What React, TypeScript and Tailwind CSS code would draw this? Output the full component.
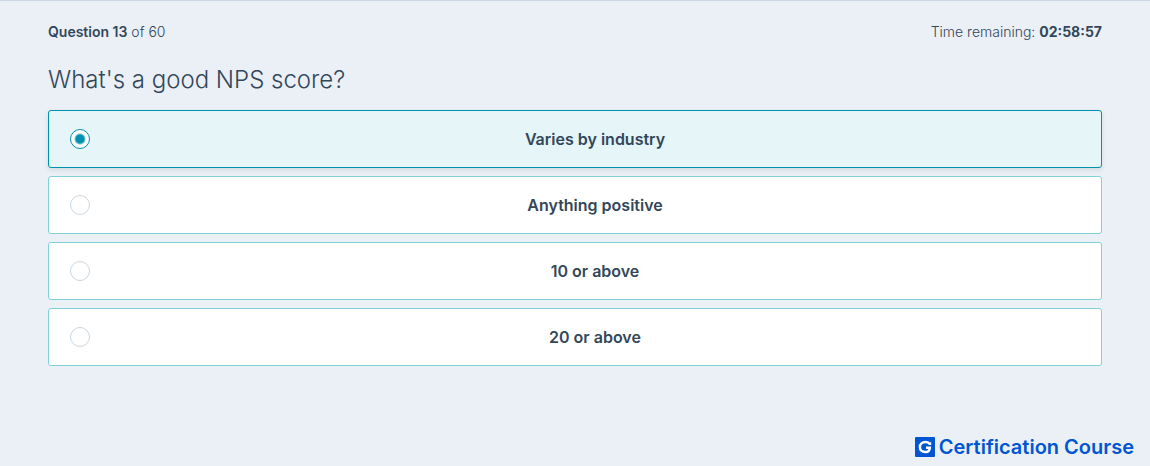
import { useState } from "react";

const options = [
  "Varies by industry",
  "Anything positive",
  "10 or above",
  "20 or above",
];

type AnswerOptionProps = {
  label: string;
  checked: boolean;
  onSelect: () => void;
};

const AnswerOption = ({ label, checked, onSelect }: AnswerOptionProps) => {
  return (
    <label
      className={`flex h-[58px] cursor-pointer items-center gap-5 rounded-[3px] border px-[21px] ${
        checked
          ? "border-[#0091ae] bg-[#e5f5f8] shadow-[0_2px_5px_rgba(45,62,80,0.12)]"
          : "border-[#7fd1de] bg-white"
      }`}
    >
      <input
        type="radio"
        name="answer"
        checked={checked}
        onChange={onSelect}
        className="size-5 shrink-0 appearance-none rounded-full border border-[#cbd6e2] bg-white checked:border-[#0091ae] checked:bg-[radial-gradient(circle,#0091ae_4px,#ffffff_6px)]"
      />
      <span className="flex-1 text-center text-base font-semibold">
        {label}
      </span>
    </label>
  );
};

const CourseLogo = () => (
  <svg viewBox="0 0 20 20" className="size-5 shrink-0" aria-hidden="true">
    <rect width="20" height="20" rx="1" fill="#0056d2" />
    <path
      d="M14.8 6.8C13.7 5.6 12.2 4.9 10.4 4.9C7.1 4.9 4.9 7 4.9 10S7.1 15.1 10.4 15.1C13 15.1 14.7 13.7 14.8 10.8H11"
      fill="none"
      stroke="#ffffff"
      strokeWidth="2.5"
    />
    <path d="M16.2 4.6V8.1H13.6Z" fill="#ffffff" />
  </svg>
);

const App = () => {
  const [selected, setSelected] = useState(0);

  return (
    <div className="flex min-h-screen flex-col border-t border-[#cbd6e2] bg-[#eaf0f6] font-['Inter',sans-serif] text-[#33475b]">
      <main className="px-12 pt-5">
        <div className="flex justify-between text-sm leading-[22px] font-light">
          <p>
            <strong className="font-semibold">Question 13</strong> of 60
          </p>
          <p>
            Time remaining: <strong className="font-bold">02:58:57</strong>
          </p>
        </div>

        <fieldset>
          <legend className="pt-5 pb-[13px] text-2xl leading-[34px] font-light">
            What's a good NPS score?
          </legend>
          <div className="flex flex-col gap-2">
            {options.map((option, index) => (
              <AnswerOption
                key={option}
                label={option}
                checked={selected === index}
                onSelect={() => setSelected(index)}
              />
            ))}
          </div>
        </fieldset>
      </main>

      <footer className="mt-auto flex items-center justify-end gap-1 px-4 pb-[5px] text-[#0056d2]">
        <CourseLogo />
        <span className="text-xl leading-7 font-semibold">
          Certification Course
        </span>
      </footer>
    </div>
  );
};

export default App;
